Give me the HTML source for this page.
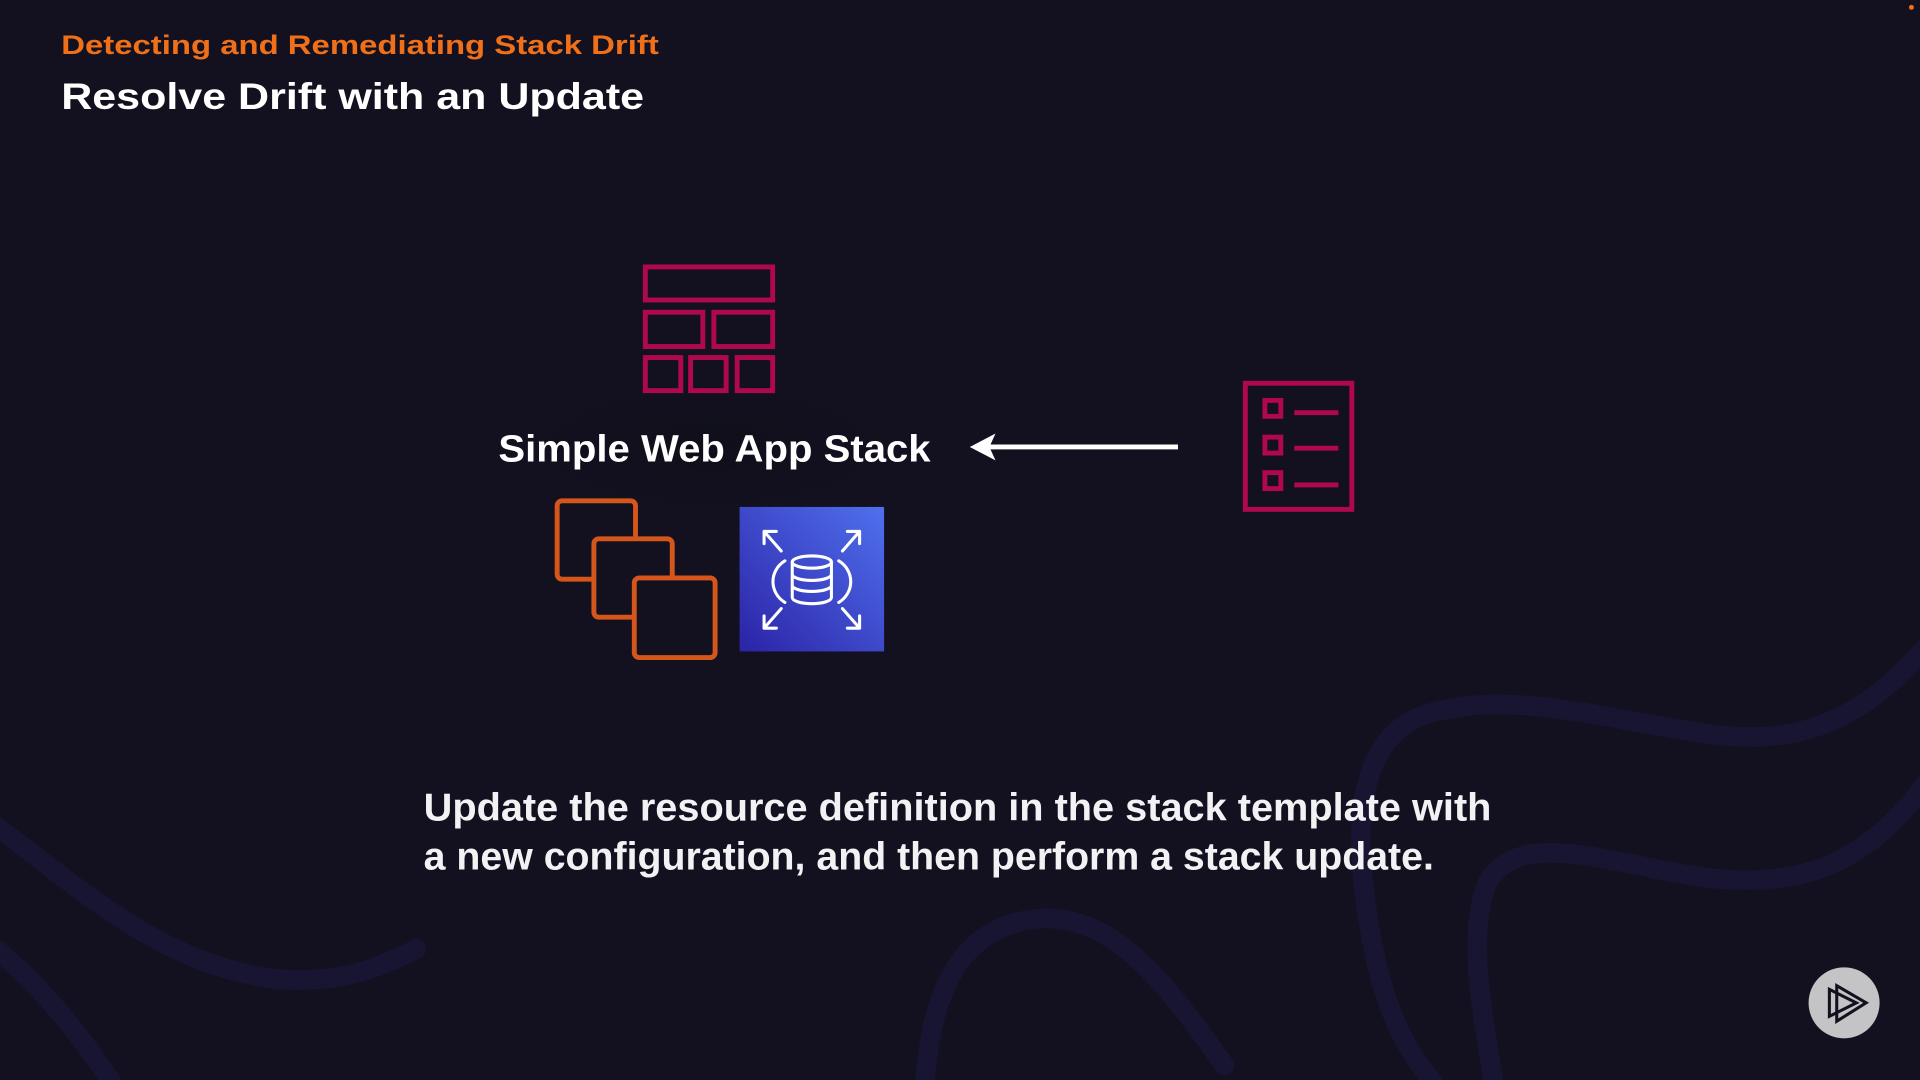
<!DOCTYPE html>
<html><head><meta charset="utf-8"><style>html,body{margin:0;padding:0;background:#13111f;overflow:hidden}svg{display:block}</style></head>
<body>
<svg width="1920" height="1080" viewBox="0 0 1568 882" preserveAspectRatio="none" xmlns="http://www.w3.org/2000/svg">
<defs>
<linearGradient id="rds" x1="0" y1="1" x2="1" y2="0"><stop offset="0" stop-color="#2b23a6"/><stop offset="1" stop-color="#4f70ee"/></linearGradient>
<radialGradient id="glow" cx="0.5" cy="0.5" r="0.5"><stop offset="0" stop-color="#0f0e1a"/><stop offset="1" stop-color="#13111f" stop-opacity="0"/></radialGradient>
</defs>
<rect width="1568" height="882" fill="#13111f"/>
<g fill="none" stroke="#1a1738" stroke-width="16" stroke-linecap="round" opacity="0.8">
<path d="M1580,520 C1530,580 1480,610 1400,600 C1320,590 1230,560 1160,585 C1100,610 1105,700 1125,790 C1140,850 1160,870 1175,890"/>
<path d="M1580,630 C1530,700 1480,730 1380,715 C1300,700 1240,680 1215,720 C1195,770 1215,840 1220,890"/>
<path d="M-10,670 C60,720 130,790 230,800 C280,803 310,790 340,775"/>
<path d="M-10,770 C30,800 70,850 95,890"/>
<path d="M755,890 C760,800 790,755 850,750 C910,748 950,800 1000,870"/>
</g>
<ellipse cx="580" cy="365" rx="200" ry="70" fill="url(#glow)"/>
<text x="50" y="44" font-family="Liberation Sans, sans-serif" font-weight="bold" font-size="22" fill="#f0701a" textLength="488" lengthAdjust="spacingAndGlyphs">Detecting and Remediating Stack Drift</text>
<text x="50" y="89" font-family="Liberation Sans, sans-serif" font-weight="bold" font-size="30" fill="#ffffff" textLength="476" lengthAdjust="spacingAndGlyphs">Resolve Drift with an Update</text>
<g fill="none" stroke="#b0084d" stroke-width="4">
<rect x="527" y="218" width="104" height="27"/>
<rect x="527" y="255" width="47" height="28"/><rect x="583" y="255" width="48" height="28"/>
<rect x="527" y="292" width="29" height="27"/><rect x="564" y="292" width="29" height="27"/><rect x="602" y="292" width="29" height="27"/>
<rect x="1017" y="313" width="87" height="103"/>
<rect x="1033" y="327" width="13" height="13"/><rect x="1033" y="357" width="13" height="13"/><rect x="1033" y="386" width="13" height="13"/>
<path d="M1057,337H1093M1057,366H1093M1057,396H1093"/>
</g>
<text x="407" y="377" font-family="Liberation Sans, sans-serif" font-weight="bold" font-size="31" fill="#ffffff" textLength="353" lengthAdjust="spacingAndGlyphs">Simple Web App Stack</text>
<line x1="808" y1="365" x2="962" y2="365" stroke="#fff" stroke-width="4"/>
<polygon points="792,365 813,354 808,365 813,376" fill="#fff"/>
<g fill="#13111f" stroke="#d4561a" stroke-width="4">
<rect x="455" y="409" width="64" height="64" rx="4"/>
<rect x="485" y="440" width="64" height="64" rx="4"/>
<rect x="518" y="472" width="66" height="65" rx="4"/>
</g>
<rect x="604" y="414" width="118" height="118" fill="url(#rds)"/>
<g fill="none" stroke="#fff" stroke-width="2.5" stroke-linecap="round" stroke-linejoin="round">
<ellipse cx="663" cy="459" rx="16" ry="5"/>
<path d="M647,459V488A16,5 0 0 0 679,488V459M647,469A16,5 0 0 0 679,469M647,478A16,5 0 0 0 679,478"/>
<path d="M641,458C628,466 628,484 641,492M685,458C698,466 698,484 685,492"/>
<path d="M624,434L638,450M624,434V444M624,434H634"/>
<path d="M702,434L688,450M702,434V444M702,434H692"/>
<path d="M624,513L638,497M624,513V503M624,513H634"/>
<path d="M702,513L688,497M702,513V503M702,513H692"/>
</g>
<text font-family="Liberation Sans, sans-serif" font-weight="bold" font-size="32" fill="#f2f2f4">
<tspan x="346" y="670" textLength="872" lengthAdjust="spacingAndGlyphs">Update the resource definition in the stack template with</tspan>
<tspan x="346" y="710" textLength="825" lengthAdjust="spacingAndGlyphs">a new configuration, and then perform a stack update.</tspan>
</text>
<circle cx="1506" cy="819" r="29" fill="#c4c4c6"/>
<g fill="none" stroke="#13111f" stroke-width="2.5" stroke-linejoin="miter">
<path d="M1494,808V830L1516,819Z"/>
<path d="M1500,805V834L1524,819Z"/>
</g>
<circle cx="1561" cy="6" r="2" fill="#f0701a"/>
</svg>
</body></html>
